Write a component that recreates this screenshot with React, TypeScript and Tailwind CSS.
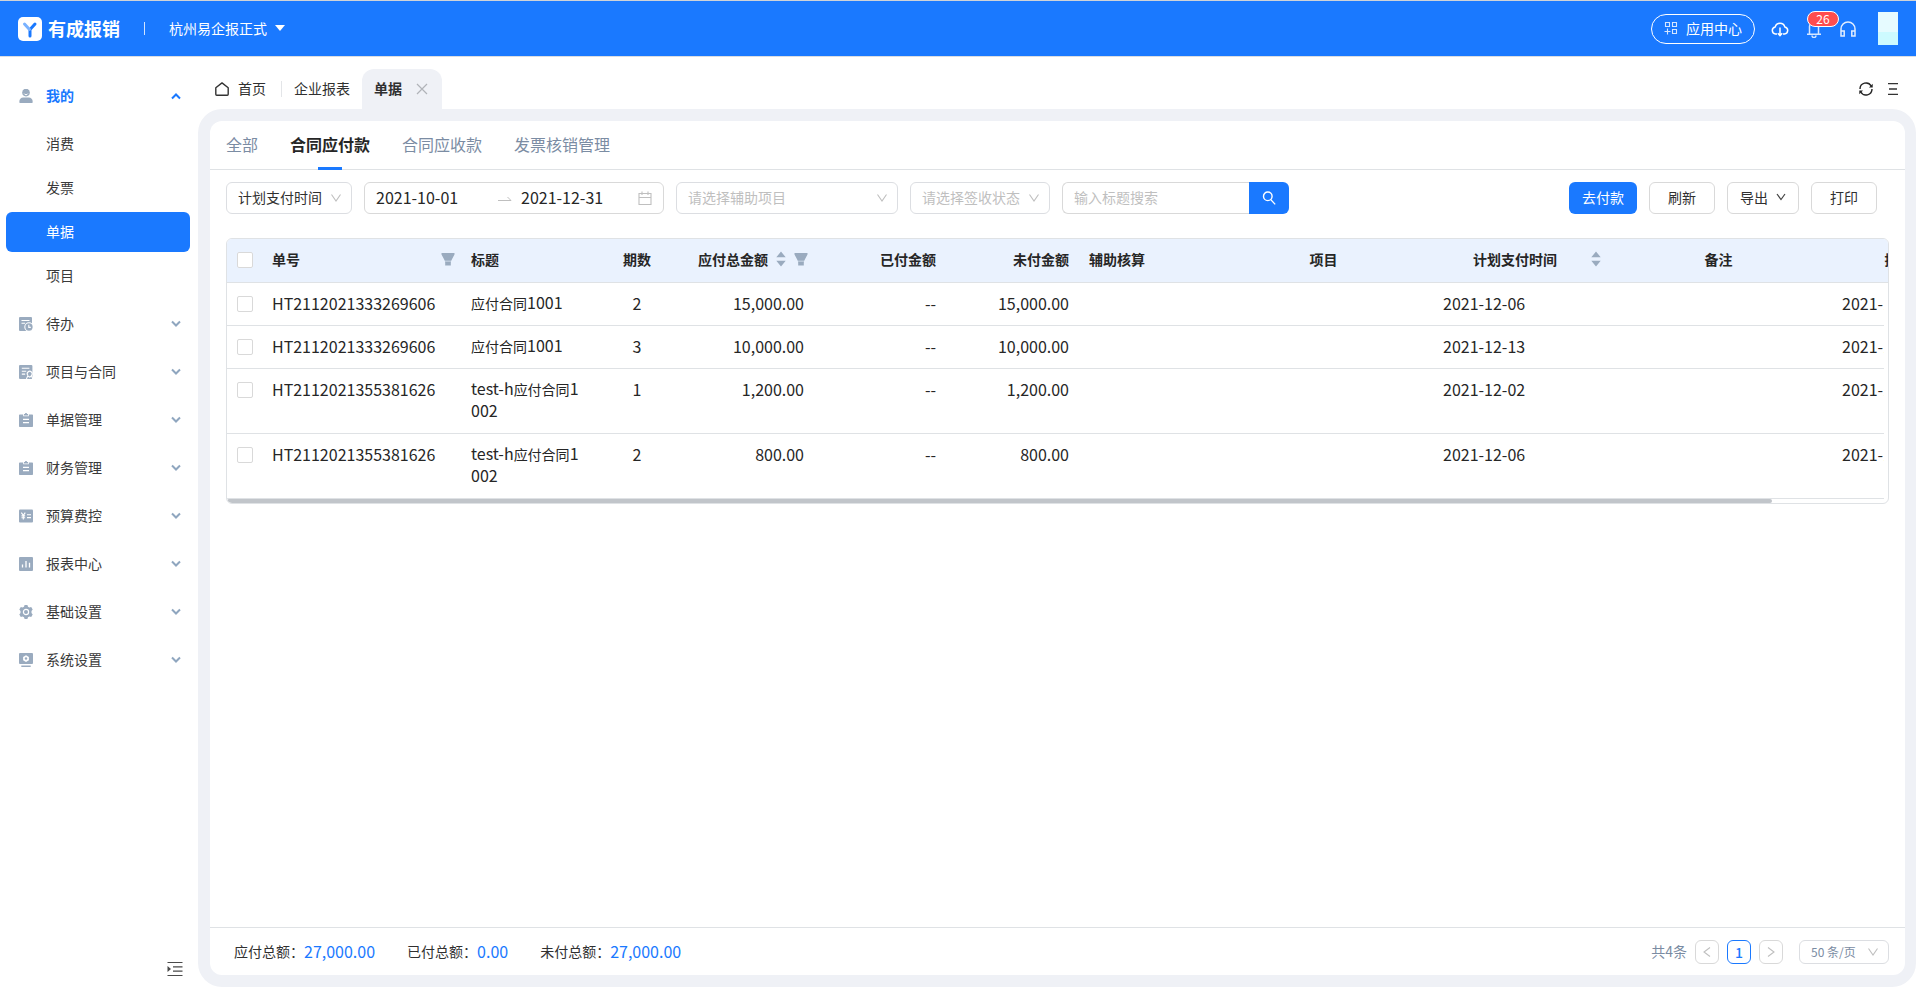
import React, { useState } from "react";

/* ================== DATA ================== */

type Row = {
  no: string;
  title: string;
  period: number;
  total: string;
  paid: string;
  unpaid: string;
  planDate: string;
  submitDate: string;
};

const ROWS: Row[] = [
  { no: "HT2112021333269606", title: "应付合同1001", period: 2, total: "15,000.00", paid: "--", unpaid: "15,000.00", planDate: "2021-12-06", submitDate: "2021-12-02" },
  { no: "HT2112021333269606", title: "应付合同1001", period: 3, total: "10,000.00", paid: "--", unpaid: "10,000.00", planDate: "2021-12-13", submitDate: "2021-12-02" },
  { no: "HT2112021355381626", title: "test-h应付合同1002", period: 1, total: "1,200.00", paid: "--", unpaid: "1,200.00", planDate: "2021-12-02", submitDate: "2021-12-02" },
  { no: "HT2112021355381626", title: "test-h应付合同1002", period: 2, total: "800.00", paid: "--", unpaid: "800.00", planDate: "2021-12-06", submitDate: "2021-12-02" },
];

const MENU = [
  { label: "待办", icon: "todo" },
  { label: "项目与合同", icon: "contract" },
  { label: "单据管理", icon: "clipboard" },
  { label: "财务管理", icon: "clipboard" },
  { label: "预算费控", icon: "budget" },
  { label: "报表中心", icon: "chart" },
  { label: "基础设置", icon: "gear" },
  { label: "系统设置", icon: "system" },
];

const SUB_MENU = ["消费", "发票", "单据", "项目"];
const TABS = ["全部", "合同应付款", "合同应收款", "发票核销管理"];

/* ================== ICONS ================== */

const MenuIcon = ({ name }: { name: string }) => (
  <svg viewBox="0 0 14 14" className="size-[14px] shrink-0" fill="#9aabbf">
    {name === "user" && (
      <>
        <circle cx="7" cy="3.6" r="3.8" />
        <path d="M5.2 4.6a2 2 0 0 0 3.6 0" stroke="#fff" strokeWidth="1" fill="none" />
        <path d="M0.3 13.2c0-3 1.6-4.6 4-4.6h5.4c2.4 0 4 1.6 4 4.6 0 .5-.3.8-.8.8H1.1c-.5 0-.8-.3-.8-.8z" />
      </>
    )}
    {name === "todo" && (
      <>
        <rect width="13" height="14" rx="1" />
        <path d="M2.5 3.5h8M2.5 6.3h3.5" stroke="#fff" strokeWidth="1.1" />
        <circle cx="10" cy="10" r="4.2" stroke="#fff" strokeWidth="1.1" />
        <path d="M9.8 7.8v2.6h2" stroke="#fff" strokeWidth="1.1" fill="none" />
      </>
    )}
    {name === "contract" && (
      <>
        <rect width="13.4" height="14" rx="1" />
        <path d="M2.8 3.3h7.6M2.8 6.2h4.4M2.8 9.1h3.4" stroke="#fff" strokeWidth="1.1" />
        <path d="M9 10.4a2.4 2.4 0 1 1 3.4 0l1.4 3.6M9 10.4L7.4 14M9 11l1.7 1.2 1.7-1.2" stroke="#fff" strokeWidth="1.1" fill="none" />
      </>
    )}
    {name === "clipboard" && (
      <>
        <path d="M1 1.4h3.2v1.9h5.6V1.4H13c.6 0 1 .4 1 1V13c0 .6-.4 1-1 1H1c-.6 0-1-.4-1-1V2.4c0-.6.4-1 1-1z" />
        <path d="M5 1h1c0-.6.4-1 1-1s1 .4 1 1h1v1.5H5z" />
        <path d="M4 6.4h6M4 9.6h6" stroke="#fff" strokeWidth="1.2" />
      </>
    )}
    {name === "budget" && (
      <>
        <rect y="0.5" width="14" height="13" rx="1" />
        <path d="M2.3 3.6l2 2.8 2-2.8M4.3 6.4v4M2.5 6.9h3.6M2.5 8.7h3.6M8 5.8h4M8 8.6h4" stroke="#fff" strokeWidth="1.1" fill="none" />
      </>
    )}
    {name === "chart" && (
      <>
        <rect width="14" height="14" rx="1" />
        <path d="M3.5 7.5v3M7 4v6.5M10.5 5.8v4.7" stroke="#fff" strokeWidth="1.3" />
      </>
    )}
    {name === "gear" && (
      <>
        <path d="M5.6 0h2.8l.6 1.7 1.3.8 1.9-.4 1.5 2.5L12.5 6v2l1.2 1.4-1.5 2.5-1.9-.4-1.3.8-.6 1.7H5.600L5 12.3l-1.3-.8-1.9.4L.3 9.4 1.5 8V6L.3 4.6l1.5-2.5 1.9.4L5 1.7z" />
        <circle cx="7" cy="7" r="2.6" stroke="#fff" strokeWidth="1.2" />
      </>
    )}
    {name === "system" && (
      <>
        <rect width="14" height="11" rx="1" />
        <path d="M2.3 12.5h9.4V14H2.3z" />
        <path d="M7 2.2l2.9 1.700v3.3L7 8.900 4.1 7.2V3.900z" fill="#fff" />
        <circle cx="7" cy="5.5" r="1.2" />
      </>
    )}
  </svg>
);

const MenuArrow = ({ open }: { open?: boolean }) => (
  <svg viewBox="0 0 10 8" className="h-2 w-[10px]" fill="none" stroke={open ? "#1a79ff" : "#8fa6bf"} strokeWidth="2">
    <path d={open ? "M1 6.5L5 2.5l4 4" : "M1 1.5l4 4 4-4"} />
  </svg>
);

const Chevron = ({ className = "text-[#bfbfbf]" }: { className?: string }) => (
  <svg viewBox="0 0 12 10" className={`h-[10px] w-3 ${className}`} fill="none" stroke="currentColor" strokeWidth="1.1">
    <path d="M1.5 1.5L6 8l4.5-6.5" />
  </svg>
);

const Filter = () => (
  <svg viewBox="0 0 14 13" className="h-[13px] w-[14px] shrink-0" fill="#9aabbf">
    <path d="M.5 0h13v1.5L10.300 7.5H3.700L.5 1.5zM4.2 9h5.6v3.5H4.2z" />
    <path d="M3.700 7h6.600l-.5 2.500H4.200z" fillOpacity="0.6" />
  </svg>
);

const Sorter = () => (
  <svg viewBox="0 0 10 16" className="h-4 w-[10px] shrink-0" fill="#9aabbf">
    <path d="M5 .5L9.7 6.3H.3zM5 15.5L9.7 9.7H.3z" />
  </svg>
);

/* ================== SMALL PARTS ================== */

// Latin letters and digits are set one step larger than the Chinese around them
const Mixed = ({ text }: { text: string }) => (
  <>
    {text.split(/([\x20-\x7e]+)/).map((part, i) =>
      i % 2 ? (
        <span key={i} className="text-base leading-none">{part}</span>
      ) : (
        part
      )
    )}
  </>
);

const Check = ({ label }: { label: string }) => (
  <input
    type="checkbox"
    aria-label={label}
    className="block size-4 appearance-none rounded-[2px] border border-[#d9d9d9] bg-white checked:bg-[#1a79ff]"
  />
);

const Select = ({ label, value, width, muted }: { label: string; value: string; width: string; muted?: boolean }) => (
  <div className={`relative h-8 shrink-0 ${width}`}>
    <select
      aria-label={label}
      className={`h-full w-full appearance-none rounded-md border border-[#dcdee2] bg-white pr-6 pb-[2px] pl-[11px] text-sm ${muted ? "text-[#bfbfbf]" : "text-[#303030]"}`}
    >
      <option>{value}</option>
    </select>
    <span className="pointer-events-none absolute inset-y-0 right-[10px] flex items-center">
      <Chevron />
    </span>
  </div>
);

const ToolButton = ({ children, width }: { children: React.ReactNode; width: string }) => (
  <button className={`flex h-8 items-center justify-center gap-2 rounded-md border border-[#d9d9d9] bg-white pb-[2px] text-sm text-[#303030] ${width}`}>
    {children}
  </button>
);

const Cols = () => (
  <colgroup>
    <col className="w-[37px]" />
    <col className="w-[199px]" />
    <col className="w-[134px]" />
    <col className="w-[80px]" />
    <col className="w-[135px]" />
    <col className="w-[132px]" />
    <col className="w-[133px]" />
    <col className="w-[135px]" />
    <col className="w-[223px]" />
    <col className="w-[170px]" />
    <col className="w-[227px]" />
    <col className="w-[177px]" />
  </colgroup>
);

/* ================== HEADER ================== */

const TopBar = () => (
  <header className="flex h-[57px] shrink-0 items-center border-t border-b border-t-[#cfd3d8] border-b-[#d9dde3] bg-[#1a79ff] pr-[18px] pl-[18px] text-white">
    <svg viewBox="0 0 24 24" className="size-6">
      <rect width="24" height="24" rx="5" fill="#fff" />
      <path d="M12 19v-6.5l5-5.5" stroke="#1a79ff" strokeWidth="3" fill="none" strokeLinecap="round" strokeLinejoin="round" />
      <path d="M6.5 7l5 5.5" stroke="#79b2ff" strokeWidth="3" strokeLinecap="round" />
    </svg>
    <span className="ml-[6px] pb-[2px] text-lg font-bold">有成报销</span>
    <span className="ml-6 h-[13px] w-px bg-white/80" />
    <button className="ml-6 flex items-center gap-2 pb-[2px] text-sm">
      杭州易企报正式
      <svg viewBox="0 0 10 6" className="h-[6px] w-[10px]" fill="#fff">
        <path d="M0 0h10L5 6z" />
      </svg>
    </button>

    <div className="ml-auto flex items-center">
      <button className="flex h-[30px] w-[104px] items-center justify-center gap-2 rounded-full border border-white pb-[2px] text-sm">
        <svg viewBox="0 0 14 14" className="size-[14px]" fill="none" stroke="#d5e6ff" strokeWidth="1.1">
          <path d="M1.5 1.5h4v4h-4zM8.5 1.5h4v4h-4zM8.5 8.5h4v4h-4zM3.5 7.5v6M.5 10.5h6" />
        </svg>
        应用中心
      </button>
      <button aria-label="下载" className="ml-4">
        <svg viewBox="0 0 18 16" className="h-4 w-[18px]" fill="none" stroke="#fff" strokeWidth="1.5">
          <path d="M6 13H4.5a3.6 3.6 0 0 1-.3-7.1 5 5 0 0 1 9.6 0A3.6 3.6 0 0 1 13.5 13H12M9 6.5v8M6.8 12.3L9 14.6l2.2-2.3" />
        </svg>
      </button>
      <button aria-label="消息" className="relative ml-[18px]">
        <svg viewBox="0 0 14 18" className="h-[18px] w-[14px]" fill="none" stroke="#d5e6ff" strokeWidth="1.5">
          <path d="M2.5 14V6.5a4.5 4.5 0 0 1 9 0V14M0 14.2h14M5 15.5a2 2 0 0 0 4 0" />
        </svg>
        <span className="absolute -top-[9px] left-0 flex h-4 w-8 items-center justify-center rounded-full border border-white bg-[#ff4d4f] text-xs">
          26
        </span>
      </button>
      <button aria-label="客服" className="ml-[19px]">
        <svg viewBox="0 0 16 16" className="size-4" fill="none" stroke="#e2eeff" strokeWidth="1.5">
          <path d="M1 13V8a7 7 0 0 1 14 0v5M1 10h3.2v5H1zM11.8 10H15v5h-3.2z" />
        </svg>
      </button>
      <span className="ml-[22px] flex h-[33px] w-5 flex-col bg-[#e6fbff]">
        <span className="mt-auto h-[13px] bg-[#cdfaff]" />
      </span>
    </div>
  </header>
);

/* ================== SIDEBAR ================== */

const Sidebar = () => (
  <aside className="flex w-[198px] shrink-0 flex-col pt-[15px] text-sm text-[#3a3a3a]">
    <button className="flex h-12 items-center gap-[13px] pr-[17px] pl-[19px] font-bold text-[#1a79ff]">
      <MenuIcon name="user" />
      <span className="flex-1 pb-[2px] text-left">我的</span>
      <MenuArrow open />
    </button>
    <nav className="flex flex-col gap-1 py-1 pr-2 pl-[6px]">
      {SUB_MENU.map((item) => (
        <a
          key={item}
          href="#"
          className={`flex h-10 items-center rounded-md pb-[2px] pl-10 ${item === "单据" ? "bg-[#1a79ff] text-white" : ""}`}
        >
          {item}
        </a>
      ))}
    </nav>
    {MENU.map((item) => (
      <button key={item.label} className="flex h-12 items-center gap-[13px] pr-[17px] pl-[19px]">
        <MenuIcon name={item.icon} />
        <span className="flex-1 pb-[2px] text-left">{item.label}</span>
        <MenuArrow />
      </button>
    ))}
    <button aria-label="收起菜单" className="mt-auto mr-[15px] mb-[10px] self-end">
      <svg viewBox="0 0 16 16" className="size-4" fill="none" stroke="#4a4a4a" strokeWidth="1.2">
        <path d="M.5 1.5h15M6 5.8h9.5M6 10.1h9.5M.5 14.5h15" />
        <path d="M.5 5l3.5 3-3.5 3z" fill="#4a4a4a" stroke="none" />
      </svg>
    </button>
  </aside>
);

/* ================== PAGE TABS ================== */

const PageTabs = () => (
  <div className="flex h-[52px] shrink-0 items-end pr-[18px] pl-[17px] text-sm text-[#303030]">
    <a href="#" className="flex h-10 items-center gap-[9px]">
      <svg viewBox="0 0 14 14" className="size-[14px]" fill="none" stroke="#333" strokeWidth="1.4">
        <path d="M.8 5.7L7 .9l6.2 4.8v6.6c0 .6-.3.9-.9.9H1.700c-.6 0-.9-.3-.9-.9z" strokeLinejoin="round" />
      </svg>
      <span className="pb-[2px]">首页</span>
    </a>
    <span className="mx-3 mb-3 ml-[15px] h-4 w-px bg-[#e3e5e8]" />
    <a href="#" className="flex h-10 items-center pb-[2px]">企业报表</a>
    <div className="ml-3 flex h-10 w-20 items-center gap-[14px] rounded-t-xl bg-[#eff1f6] pl-3 font-bold">
      <span className="pb-[2px]">单据</span>
      <button aria-label="关闭">
        <svg viewBox="0 0 12 12" className="size-3" stroke="#b0b3b8" strokeWidth="1.2">
          <path d="M1 1l10 10M11 1L1 11" />
        </svg>
      </button>
    </div>
    <div className="ml-auto flex h-10 items-center gap-[15px]">
      <button aria-label="刷新页面">
        <svg viewBox="0 0 14 14" className="size-[14px]" fill="none" stroke="#222" strokeWidth="1.4">
          <path d="M1 7a6 6 0 0 1 11.2-3M13 7a6 6 0 0 1-11.2 3" />
          <path d="M13.7 1.8v3.7H10zM.3 12.2V8.5H4z" fill="#222" stroke="none" />
        </svg>
      </button>
      <button aria-label="页面列表">
        <svg viewBox="0 0 10 12" className="h-3 w-[10px]" stroke="#333" strokeWidth="1.3">
          <path d="M0 .7h10M1 6h8M0 11.3h10" />
        </svg>
      </button>
    </div>
  </div>
);

/* ================== TOOLBAR ================== */

const Toolbar = () => (
  <div className="flex gap-3 pt-3 pr-7 pl-4">
    <Select label="时间类型" value="计划支付时间" width="w-[126px]" />
    <div className="flex h-8 w-[300px] shrink-0 items-center rounded-md border border-[#d9d9d9] px-[11px] text-base text-[#262626]">
      <input aria-label="开始日期" defaultValue="2021-10-01" className="w-[122px] pb-[2px] outline-none" />
      <svg viewBox="0 0 14 6" className="h-[6px] w-[14px] shrink-0" fill="none" stroke="#bfbfbf">
        <path d="M0 5.5h13L9.5 2" />
      </svg>
      <input aria-label="结束日期" defaultValue="2021-12-31" className="ml-[9px] w-[103px] pb-[2px] outline-none" />
      <svg viewBox="0 0 14 14" className="ml-auto size-[14px] shrink-0" fill="none" stroke="#bfbfbf" strokeWidth="1.1">
        <path d="M1 2.5h12v11H1zM1 6.5h12M4 .5v3.5M10 .5v3.5" />
      </svg>
    </div>
    <Select label="辅助项目" value="请选择辅助项目" width="w-[222px]" muted />
    <Select label="签收状态" value="请选择签收状态" width="w-[140px]" muted />
    <div className="flex h-8 w-[227px]">
      <input
        aria-label="标题"
        placeholder="输入标题搜索"
        className="min-w-0 flex-1 rounded-l-md border border-r-0 border-[#d9d9d9] pb-[2px] pl-[11px] text-sm outline-none placeholder:text-[#bfbfbf]"
      />
      <button aria-label="搜索" className="flex w-10 items-center justify-center rounded-r-md bg-[#1a79ff]">
        <svg viewBox="0 0 14 14" className="size-[14px]" fill="none" stroke="#fff" strokeWidth="1.4">
          <circle cx="5.8" cy="5.3" r="4.3" />
          <path d="M8.8 8.6l4.4 4.8" />
        </svg>
      </button>
    </div>
    <div className="ml-auto flex gap-3">
      <button className="h-8 w-[68px] rounded-md bg-[#1a79ff] pb-[2px] text-sm text-white">去付款</button>
      <ToolButton width="w-[66px]">刷新</ToolButton>
      <ToolButton width="w-[72px]">
        导出
        <svg viewBox="0 0 10 8" className="h-2 w-[10px]" fill="none" stroke="#444" strokeWidth="1.2">
          <path d="M1 1l4 5.5L9 1" />
        </svg>
      </ToolButton>
      <ToolButton width="w-[66px]">打印</ToolButton>
    </div>
  </div>
);

/* ================== TABLE ================== */

const ContractTable = () => (
  <div className="mt-6 mr-4 ml-4 overflow-hidden rounded-md border border-[#dfe2e5] text-sm text-[#262626]">
    <table className="w-[1782px] table-fixed border-collapse bg-[#eaf2fe]">
      <Cols />
      <thead>
        <tr className="h-[43px] border-b border-[#dfe2e5]">
          <th className="pl-[10px]"><Check label="全选" /></th>
          <th className="px-2 pb-[2px]">
            <span className="flex items-center justify-between">单号<Filter /></span>
          </th>
          <th className="px-2 pb-[2px] text-left">标题</th>
          <th className="px-2 pb-[2px] text-center">期数</th>
          <th className="pr-1 pb-[2px] pl-2">
            <span className="flex items-center justify-end gap-2">应付总金额<Sorter /><Filter /></span>
          </th>
          <th className="px-2 pb-[2px] text-right">已付金额</th>
          <th className="px-2 pb-[2px] text-right">未付金额</th>
          <th className="px-3 pb-[2px] text-left">辅助核算</th>
          <th className="px-2 pb-[2px]">项目</th>
          <th className="pr-1 pb-[2px] pl-1">
            <span className="flex items-center">
              <span className="flex-1">计划支付时间</span>
              <Sorter />
            </span>
          </th>
          <th className="px-2 pb-[2px]">备注</th>
          <th className="pr-6 pb-[2px] pl-2">提交时间</th>
        </tr>
      </thead>
    </table>
    <div className="mr-1 overflow-hidden">
      <table className="w-[1782px] table-fixed border-collapse">
        <Cols />
        <tbody>
          {ROWS.map((row, i) => (
            <tr key={i} className="border-b border-[#dfe2e5] align-top leading-[22px]">
              <td className="pt-[13px] pl-[10px]"><Check label={`选择 ${row.no}`} /></td>
              <td className="px-2 pt-[9px] pb-[11px] text-base leading-[22px]">{row.no}</td>
              <td className="pt-[9px] pr-4 pb-[11px] pl-2 break-all"><Mixed text={row.title} /></td>
              <td className="px-2 pt-[9px] pb-[11px] text-center text-base leading-[22px]">{row.period}</td>
              <td className="px-2 pt-[9px] pb-[11px] text-right text-base leading-[22px]">{row.total}</td>
              <td className="px-2 pt-[9px] pb-[11px] text-right text-base leading-[22px]">{row.paid}</td>
              <td className="px-2 pt-[9px] pb-[11px] text-right text-base leading-[22px]">{row.unpaid}</td>
              <td />
              <td />
              <td className="px-2 pt-[9px] pb-[11px] text-base leading-[22px]">{row.planDate}</td>
              <td />
              <td className="px-[10px] pt-[9px] pb-[11px] text-base leading-[22px]">{row.submitDate}</td>
            </tr>
          ))}
        </tbody>
      </table>
    </div>
    <div className="h-1">
      <div className="h-full w-[93%] rounded-full bg-[#c1c5ca]" />
    </div>
  </div>
);

/* ================== FOOTER ================== */

const Total = ({ label, value }: { label: string; value: string }) => (
  <span className="flex items-center pb-[2px] text-sm text-[#303030]">
    {label}：<span className="text-base text-[#1a79ff]">{value}</span>
  </span>
);

const PageArrow = ({ label, d }: { label: string; d: string }) => (
  <button aria-label={label} className="flex size-6 items-center justify-center rounded-md border border-[#d9d9d9]">
    <svg viewBox="0 0 10 12" className="h-3 w-[10px]" fill="none" stroke="#bfbfbf" strokeWidth="1.1">
      <path d={d} />
    </svg>
  </button>
);

const Footer = () => (
  <div className="mt-auto flex h-12 shrink-0 items-center border-t border-[#dfe2e5] pr-4 pl-6">
    <div className="flex gap-8">
      <Total label="应付总额" value="27,000.00" />
      <Total label="已付总额" value="0.00" />
      <Total label="未付总额" value="27,000.00" />
    </div>
    <div className="ml-auto flex items-center gap-2 text-sm text-[#7b8ca3]">
      <span className="pb-[2px]">共4条</span>
      <PageArrow label="上一页" d="M8 1.5L2 6l6 4.5" />
      <button className="flex size-6 items-center justify-center rounded-md border border-[#1a79ff] font-medium text-[#1a79ff]">1</button>
      <PageArrow label="下一页" d="M2 1.5L8 6l-6 4.5" />
      <div className="relative ml-2 h-6 w-[90px]">
        <select aria-label="每页条数" className="h-full w-full appearance-none rounded-md border border-[#dcdee2] bg-white pl-[11px] text-xs text-[#7b8ca3]">
          <option>50 条/页</option>
        </select>
        <span className="pointer-events-none absolute inset-y-0 right-[10px] flex items-center">
          <Chevron />
        </span>
      </div>
    </div>
  </div>
);

/* ================== APP ================== */

export default function App() {
  const [tab, setTab] = useState("合同应付款");

  return (
    <div className="flex min-h-screen flex-col bg-white font-['Noto_Sans_CJK_SC',sans-serif]">
      <TopBar />
      <div className="flex flex-1">
        <Sidebar />
        <div className="flex min-w-0 flex-1 flex-col">
          <PageTabs />
          <main className="flex flex-1 flex-col rounded-3xl bg-[#eff1f6] pt-3 pr-[11px] pb-3 pl-3">
            <div className="flex flex-1 flex-col rounded-xl bg-white">
              <div className="flex h-[49px] gap-8 border-b border-[#dfe2e5] px-4 text-base">
                {TABS.map((item) => (
                  <button
                    key={item}
                    onClick={() => setTab(item)}
                    className={`relative h-12 pb-[2px] ${item === tab ? "font-bold text-[#262626]" : "text-[#7b8ca3]"}`}
                  >
                    {item}
                    {item === tab && (
                      <span className="absolute -bottom-px left-1/2 h-[3px] w-6 -translate-x-1/2 bg-[#1a79ff]" />
                    )}
                  </button>
                ))}
              </div>
              <Toolbar />
              <ContractTable />
              <Footer />
            </div>
          </main>
        </div>
      </div>
    </div>
  );
}
